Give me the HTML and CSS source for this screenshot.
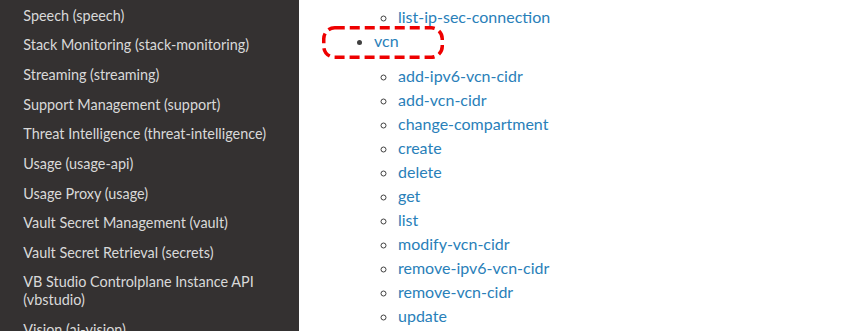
FILE: index.html
```html
<!DOCTYPE html>
<html lang="en">
<head>
    <meta charset="UTF-8">
    <title>vcn - OCI CLI Command Reference</title>
    <link rel="stylesheet" href="styles.css">
</head>
<body>
    <div class="page">
        <nav class="side-nav">
            <ul class="side-menu">
                <li><a href="#">Speech (speech)</a></li>
                <li><a href="#">Stack Monitoring (stack-monitoring)</a></li>
                <li><a href="#">Streaming (streaming)</a></li>
                <li><a href="#">Support Management (support)</a></li>
                <li><a href="#">Threat Intelligence (threat-intelligence)</a></li>
                <li><a href="#">Usage (usage-api)</a></li>
                <li><a href="#">Usage Proxy (usage)</a></li>
                <li><a href="#">Vault Secret Management (vault)</a></li>
                <li><a href="#">Vault Secret Retrieval (secrets)</a></li>
                <li><a href="#">VB Studio Controlplane Instance API (vbstudio)</a></li>
                <li><a href="#">Vision (ai-vision)</a></li>
            </ul>
        </nav>

        <main class="content">
            <ul class="cmd-list">
                <li class="cmd-group cmd-group-tail">
                    <ul class="sub-list">
                        <li><a href="#">list-ip-sec-connection</a></li>
                    </ul>
                </li>
                <li class="cmd-group">
                    <a href="#" class="highlighted">vcn
                        <svg class="highlight-box" width="122" height="33" viewBox="0 0 122 33">
                            <rect x="1.75" y="1.75" width="118.5" height="29.5" rx="11" ry="11"
                                  fill="none" stroke="#ee0000" stroke-width="3.5" stroke-dasharray="10 5"/>
                        </svg>
                    </a>
                    <ul class="sub-list">
                        <li><a href="#">add-ipv6-vcn-cidr</a></li>
                        <li><a href="#">add-vcn-cidr</a></li>
                        <li><a href="#">change-compartment</a></li>
                        <li><a href="#">create</a></li>
                        <li><a href="#">delete</a></li>
                        <li><a href="#">get</a></li>
                        <li><a href="#">list</a></li>
                        <li><a href="#">modify-vcn-cidr</a></li>
                        <li><a href="#">remove-ipv6-vcn-cidr</a></li>
                        <li><a href="#">remove-vcn-cidr</a></li>
                        <li><a href="#">update</a></li>
                    </ul>
                </li>
            </ul>
        </main>
    </div>
</body>
</html>
```

FILE: styles.css
```css
* {
    margin: 0;
    padding: 0;
    box-sizing: border-box;
}

body {
    font-family: 'Lato', 'Liberation Sans', Arial, sans-serif;
    color: #404040;
    background: #fff;
    overflow: hidden;
}

a {
    text-decoration: none;
}

.page {
    display: flex;
    height: 331px;
}

/* sidebar */

.side-nav {
    width: 299px;
    flex-shrink: 0;
    background: #343131;
    padding-top: 1px;
}

.side-menu {
    list-style: none;
}

.side-menu a {
    display: block;
    color: #d9d9d9;
    font-size: 14.4px;
    line-height: 18px;
    padding: 5.825px 23.3px;
}

/* main content */

.content {
    flex: 1;
    padding: 5px 0 0 75px;
    font-size: 16px;
    line-height: 24px;
}

.content a {
    color: #2980B9;
}

.cmd-list {
    list-style: disc;
}

.cmd-group-tail {
    list-style: none;
}

.sub-list {
    list-style: circle;
    margin-left: 24px;
}

.cmd-group > .highlighted + .sub-list {
    margin-top: 11px;
}

.highlighted {
    position: relative;
}

/* dashed callout drawn over the selected group */
.highlight-box {
    position: absolute;
    left: -52px;
    top: -5px;
    pointer-events: none;
}
```
